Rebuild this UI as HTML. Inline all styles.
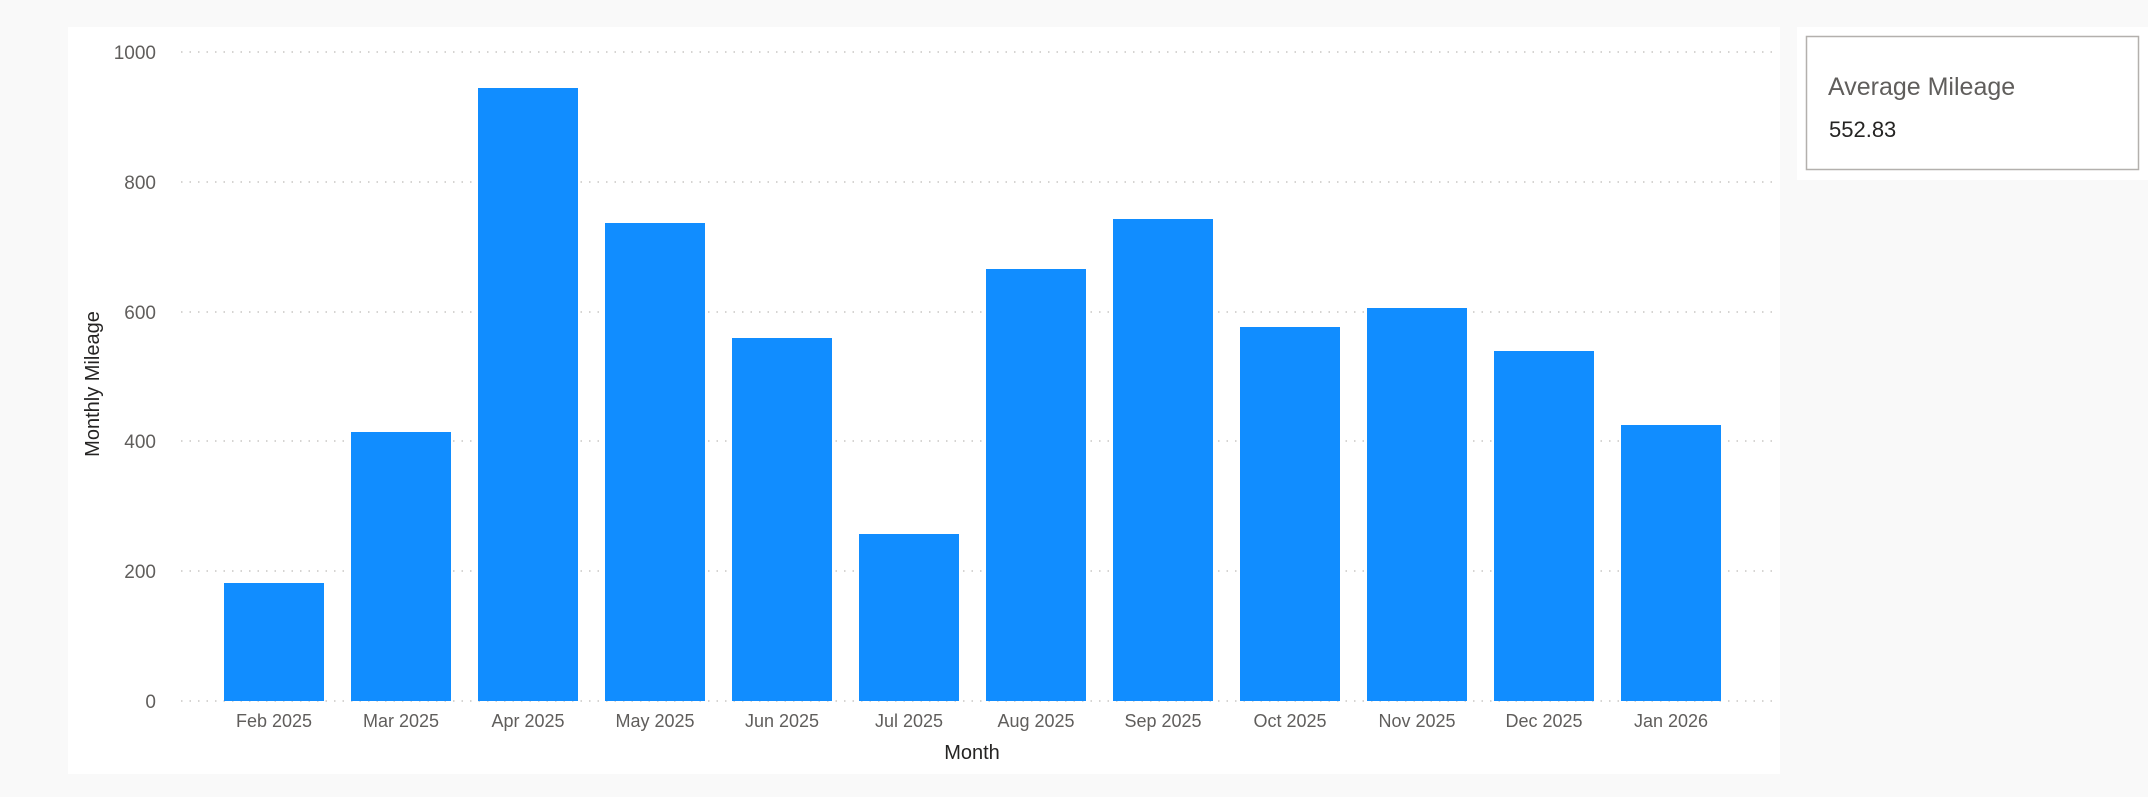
<!DOCTYPE html>
<html><head><meta charset="utf-8"><style>
html,body{margin:0;padding:0;width:2148px;height:797px;background:#f9f9f9;overflow:hidden;font-family:"Liberation Sans",sans-serif}
svg{position:absolute;left:0;top:0}
</style></head><body>
<svg width="2148" height="797" xmlns="http://www.w3.org/2000/svg">
<rect x="68" y="27" width="1712" height="747" fill="#fff"/>
<rect x="1797" y="27" width="351" height="153" fill="#fff"/>
<rect x="1806.5" y="36.5" width="332" height="133" fill="#fff" stroke="#b3b0ad" stroke-width="1.5"/>
<text x="1828" y="95" font-size="25" fill="#605e5c">Average Mileage</text>
<text x="1829" y="137" font-size="22" fill="#252423">552.83</text>
<g stroke="#c8c6c4" stroke-width="1.5" stroke-dasharray="1.5,7">
<line x1="181" x2="1772" y1="52" y2="52"/>
<line x1="181" x2="1772" y1="182" y2="182"/>
<line x1="181" x2="1772" y1="312" y2="312"/>
<line x1="181" x2="1772" y1="441" y2="441"/>
<line x1="181" x2="1772" y1="571" y2="571"/>
<line x1="181" x2="1772" y1="701" y2="701"/>
</g>
<g font-size="19" fill="#605e5c" text-anchor="end">
<text x="156" y="59">1000</text>
<text x="156" y="189">800</text>
<text x="156" y="319">600</text>
<text x="156" y="448">400</text>
<text x="156" y="578">200</text>
<text x="156" y="708">0</text>
</g>
<g fill="#118dff">
<rect x="224" y="583" width="100" height="118"/>
<rect x="351" y="432" width="100" height="269"/>
<rect x="478" y="88" width="100" height="613"/>
<rect x="605" y="223" width="100" height="478"/>
<rect x="732" y="338" width="100" height="363"/>
<rect x="859" y="534" width="100" height="167"/>
<rect x="986" y="269" width="100" height="432"/>
<rect x="1113" y="219" width="100" height="482"/>
<rect x="1240" y="327" width="100" height="374"/>
<rect x="1367" y="308" width="100" height="393"/>
<rect x="1494" y="351" width="100" height="350"/>
<rect x="1621" y="425" width="100" height="276"/>
</g>
<g font-size="18" fill="#605e5c" text-anchor="middle">
<text x="274" y="727">Feb 2025</text>
<text x="401" y="727">Mar 2025</text>
<text x="528" y="727">Apr 2025</text>
<text x="655" y="727">May 2025</text>
<text x="782" y="727">Jun 2025</text>
<text x="909" y="727">Jul 2025</text>
<text x="1036" y="727">Aug 2025</text>
<text x="1163" y="727">Sep 2025</text>
<text x="1290" y="727">Oct 2025</text>
<text x="1417" y="727">Nov 2025</text>
<text x="1544" y="727">Dec 2025</text>
<text x="1671" y="727">Jan 2026</text>
</g>
<text x="972" y="759" font-size="20" fill="#252423" text-anchor="middle">Month</text>
<text transform="translate(99,384) rotate(-90)" font-size="20" fill="#252423" text-anchor="middle">Monthly Mileage</text>
</svg>
</body></html>
